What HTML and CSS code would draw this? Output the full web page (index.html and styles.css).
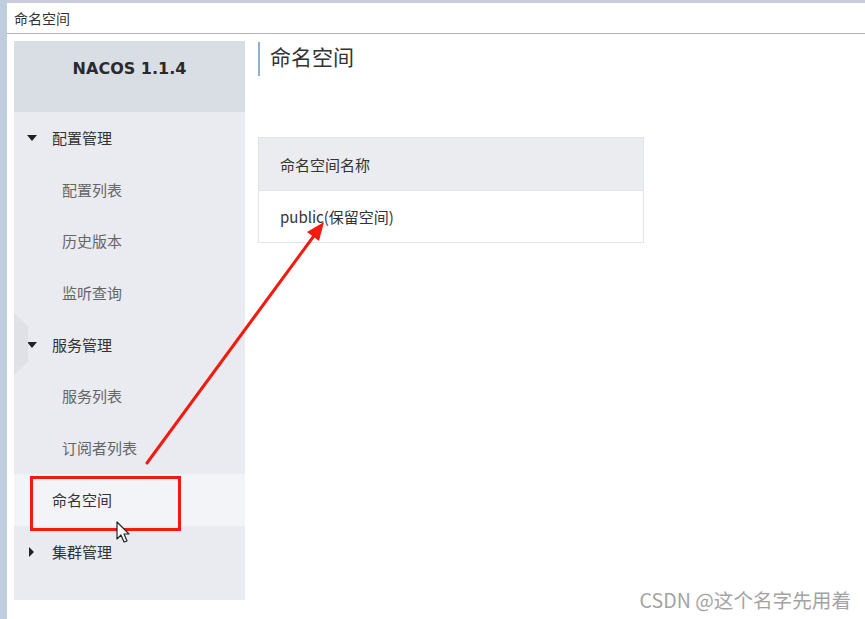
FILE: index.html
```html
<!DOCTYPE html>
<html lang="zh-CN">
<head>
    <meta charset="UTF-8">
    <title>命名空间</title>
    <link rel="stylesheet" href="styles.css">
</head>
<body>
    <div class="window">
        <div class="titlebar">命名空间</div>
        <div class="main">
            <div class="sidebar">
                <div class="brand">NACOS 1.1.4</div>
                <div class="menu-group open">配置管理</div>
                <div class="menu-item">配置列表</div>
                <div class="menu-item">历史版本</div>
                <div class="menu-item">监听查询</div>
                <div class="menu-group open">服务管理</div>
                <div class="menu-item">服务列表</div>
                <div class="menu-item">订阅者列表</div>
                <div class="menu-single active">命名空间</div>
                <div class="menu-group">集群管理</div>
                <div class="handle"></div>
            </div>
            <div class="content">
                <div class="page-title">命名空间</div>
                <table class="ns-table">
                    <thead>
                        <tr><th>命名空间名称</th></tr>
                    </thead>
                    <tbody>
                        <tr><td>public(保留空间)</td></tr>
                    </tbody>
                </table>
            </div>
        </div>
        <div class="watermark">CSDN @这个名字先用着</div>
    </div>

    <!-- annotation layer -->
    <div class="mark-box"></div>
    <svg class="arrow" width="865" height="619" viewBox="0 0 865 619">
        <line x1="147" y1="463" x2="316" y2="233" stroke="#f21b0f" stroke-width="3" stroke-linecap="round"/>
        <polygon points="324,222 307,232 319,241" fill="#f21b0f"/>
    </svg>
    <svg class="cursor" width="16" height="24" viewBox="0 0 16 24">
        <path d="M1 1 L1 18 L5 14 L8 21 L11 20 L8 13 L13 13 Z" fill="#fff" stroke="#222" stroke-width="1.2" stroke-linejoin="round"/>
    </svg>
</body>
</html>
```

FILE: styles.css
```css
body {
    margin: 0;
    background: #fff;
    font-family: "Noto Sans CJK SC", "Noto Sans", sans-serif;
    color: #333;
}
.window {
    width: 865px;
    height: 619px;
    box-sizing: border-box;
    border-left: 7px solid #bfcddd;
    position: relative;
}
.titlebar {
    height: 30px;
    border-top: 3px solid #c9cdda;
    border-bottom: 1px solid #b3b3b3;
    font-size: 14px;
    line-height: 30px;
    padding-left: 7px;
    color: #333;
}
.main {
    display: flex;
    padding-top: 7px;
}
.sidebar {
    width: 231px;
    height: 559px;
    margin-left: 7px;
    background: #e9ebf0;
    position: relative;
}
.brand {
    height: 71px;
    background: #d9dde4;
    font-family: "DejaVu Sans", sans-serif;
    font-weight: bold;
    font-size: 16px;
    color: #2a2a2a;
    text-align: center;
    line-height: 55px;
}
.menu-group, .menu-item, .menu-single {
    height: 51.7px;
    line-height: 51.7px;
    font-size: 15px;
}
.menu-group {
    padding-left: 38px;
    color: #333;
    position: relative;
}
.menu-group::before {
    content: "";
    position: absolute;
    left: 15px;
    top: 21px;
    border-left: 5px solid #222;
    border-top: 5px solid transparent;
    border-bottom: 5px solid transparent;
}
.menu-group.open::before {
    left: 13px;
    top: 23px;
    border-top: 6px solid #222;
    border-left: 5px solid transparent;
    border-right: 5px solid transparent;
    border-bottom: none;
}
.menu-item {
    padding-left: 48px;
    color: #666;
}
.menu-single {
    padding-left: 38px;
    color: #333;
}
.menu-single.active {
    background: #f3f4f8;
}
.handle {
    position: absolute;
    left: 0;
    top: 272px;
    width: 14px;
    height: 62px;
    background: #dfe1e6;
    clip-path: polygon(0 0, 100% 22%, 100% 78%, 0 100%);
}
.content {
    margin-left: 13px;
    padding-top: 1px;
}
.page-title {
    height: 34px;
    border-left: 2px solid #8fb0d0;
    padding-left: 10px;
    font-size: 21px;
    line-height: 28px;
    color: #333;
}
.ns-table {
    margin-top: 61px;
    width: 386px;
    border-collapse: collapse;
    font-size: 15px;
}
.ns-table th, .ns-table td {
    text-align: left;
    font-weight: normal;
    padding: 0 0 0 21px;
    border: 1px solid #e2e4e8;
}
.ns-table th {
    height: 52px;
    background: #ebecf0;
    color: #333;
}
.ns-table td {
    height: 51px;
    color: #333;
}
.watermark {
    position: absolute;
    right: 14px;
    bottom: 5px;
    font-size: 19.6px;
    color: #a3a3a3;
}
.mark-box {
    position: absolute;
    left: 30px;
    top: 476px;
    width: 145px;
    height: 49px;
    border: 3px solid #f21b0f;
}
.arrow {
    position: absolute;
    left: 0;
    top: 0;
}
.cursor {
    position: absolute;
    left: 116px;
    top: 521px;
}
```
